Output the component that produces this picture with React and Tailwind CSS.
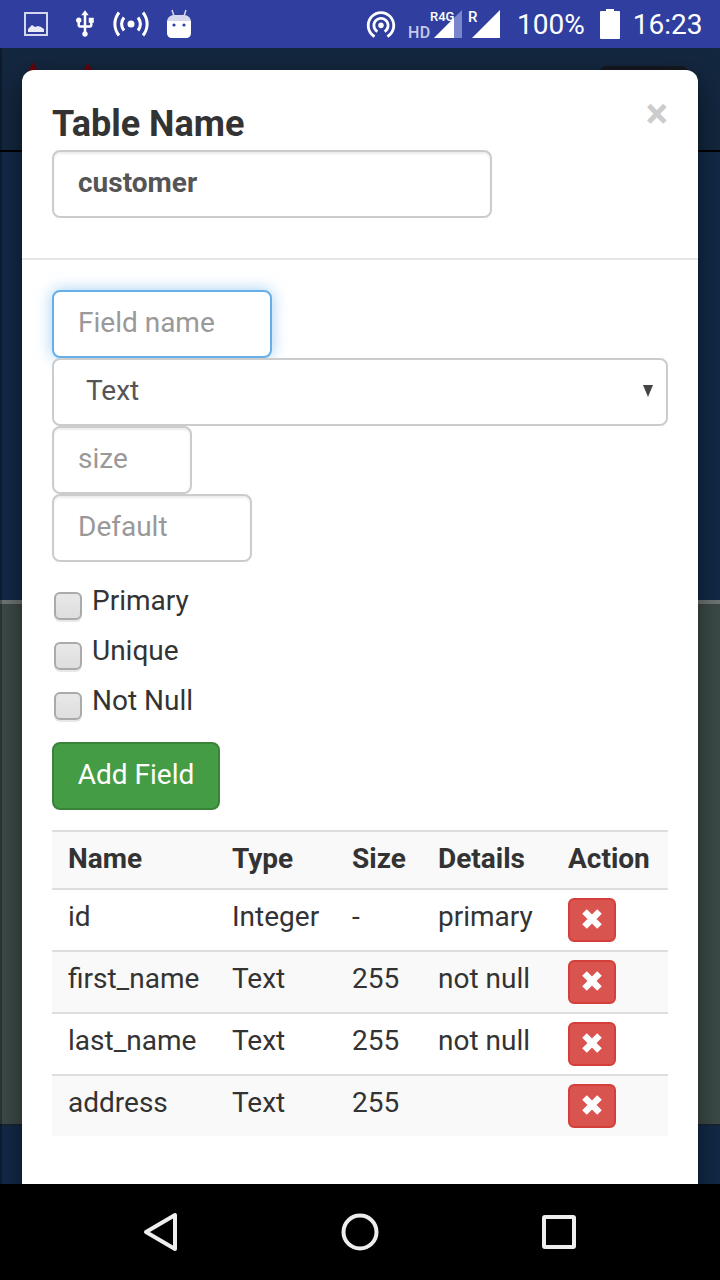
import React from "react";

const fields = [
  { name: "id", type: "Integer", size: "-", details: "primary" },
  { name: "first_name", type: "Text", size: "255", details: "not null" },
  { name: "last_name", type: "Text", size: "255", details: "not null" },
  { name: "address", type: "Text", size: "255", details: "" },
];

function StatusBar() {
  return (
    <div className="h-12 shrink-0 bg-[#303f9f] flex items-center text-white relative z-20">
      <svg width="24" height="24" viewBox="0 0 24 24" className="ml-6 shrink-0">
        <rect x="1" y="1" width="22" height="22" fill="none" stroke="#d5d8ec" strokeWidth="2" />
        <path d="M4 20v-3l4-4 3 2 3-1 3 1 3 2v3z" fill="#e8eaf6" />
      </svg>
      <svg width="30" height="30" viewBox="0 0 24 24" className="ml-[22px] shrink-0" fill="white">
        <path d="M15 7v4h1v2h-3V5h2l-3-4-3 4h2v8H8v-2.07c.7-.37 1.2-1.08 1.2-1.93 0-1.21-.99-2.2-2.2-2.2-1.21 0-2.2.99-2.2 2.2 0 .85.5 1.56 1.2 1.93V13c0 1.11.89 2 2 2h3v3.05c-.71.37-1.2 1.1-1.2 1.95 0 1.22.99 2.2 2.2 2.2 1.21 0 2.2-.98 2.2-2.2 0-.85-.49-1.58-1.2-1.95V15h3c1.11 0 2-.89 2-2v-2h1V7h-4z" />
      </svg>
      <svg width="36" height="28" viewBox="0 0 36 28" className="ml-[13px] shrink-0" fill="none" stroke="white" strokeWidth="3">
        <circle cx="18" cy="14" r="3.5" fill="white" stroke="none" />
        <path d="M11 7.5c-3 4-3 9 0 13M25 7.5c3 4 3 9 0 13" />
        <path d="M6 2.5c-5.5 7-5.5 16 0 23M30 2.5c5.5 7 5.5 16 0 23" />
      </svg>
      <svg width="26" height="30" viewBox="0 0 26 30" className="ml-[17px] shrink-0">
        <path d="M6 1l2 6M20 1l-2 6" stroke="#d5d8ec" strokeWidth="1.5" />
        <path d="M1 13c0-4 3-7 7-7h10c4 0 7 3 7 7z" fill="#d5d8ec" />
        <path d="M1 12h24v12c0 3-2 5-5 5H6c-3 0-5-2-5-5z" fill="white" />
        <circle cx="8" cy="16" r="1.6" fill="#303f9f" />
        <circle cx="18" cy="16" r="1.6" fill="#303f9f" />
      </svg>
      <svg width="34" height="34" viewBox="0 0 24 24" className="ml-[172px] shrink-0" fill="white">
        <path d="M12 11c-1.1 0-2 .9-2 2s.9 2 2 2 2-.9 2-2-.9-2-2-2zm6 2c0-3.31-2.69-6-6-6s-6 2.69-6 6c0 2.22 1.21 4.15 3 5.19l1-1.74c-1.19-.7-2-1.97-2-3.45 0-2.21 1.79-4 4-4s4 1.79 4 4c0 1.48-.81 2.75-2 3.45l1 1.74c1.79-1.04 3-2.97 3-5.19zM12 3C6.48 3 2 7.48 2 13c0 3.7 2.01 6.92 4.99 8.65l1-1.73C5.61 18.53 4 15.96 4 13c0-4.42 3.58-8 8-8s8 3.58 8 8c0 2.96-1.61 5.53-4 6.92l1 1.73c2.99-1.73 5-4.95 5-8.65 0-5.52-4.48-10-10-10z" />
      </svg>
      <div className="relative ml-[10px] w-[54px] h-12 shrink-0">
        <span className="absolute left-0 top-[25px] text-[16px] leading-[15px] font-medium tracking-[0.5px] text-[#c5cae9]">HD</span>
        <span className="absolute left-[22px] top-[10px] text-[13px] leading-[13px] font-medium">R4G</span>
      </div>
      <svg width="30" height="30" viewBox="0 0 30 30" className="-ml-[28px] mt-[2px] shrink-0">
        <path d="M0 28L28 0v28z" fill="#7986cb" />
        <path d="M0 28l20-20v20z" fill="white" />
      </svg>
      <div className="relative ml-[4px] w-[12px] h-12 shrink-0">
        <span className="absolute left-0 top-[10px] text-[15px] leading-[15px] font-medium">R</span>
      </div>
      <svg width="30" height="30" viewBox="0 0 30 30" className="-ml-[8px] mt-[2px] shrink-0">
        <path d="M0 28L28 0v28z" fill="white" />
      </svg>
      <span className="ml-[15px] mt-[1px] text-[28px] leading-none">100%</span>
      <svg width="20" height="30" viewBox="0 0 20 30" className="ml-[15px] shrink-0">
        <path d="M6 0h8v2h5a1 1 0 0 1 1 1v26a1 1 0 0 1-1 1H1a1 1 0 0 1-1-1V3a1 1 0 0 1 1-1h5z" fill="white" />
      </svg>
      <span className="ml-[13px] mt-[1px] text-[28px] leading-none">16:23</span>
    </div>
  );
}

function NavBar() {
  return (
    <div className="h-24 shrink-0 bg-black flex items-center relative z-20">
      <svg width="36" height="40" viewBox="0 0 36 40" className="ml-[143px] shrink-0" fill="none" stroke="#eeeeee" strokeWidth="4" strokeLinejoin="round">
        <path d="M32 3v34L3 20z" />
      </svg>
      <svg width="38" height="38" viewBox="0 0 38 38" className="ml-[162px] shrink-0" fill="none" stroke="#eeeeee" strokeWidth="4">
        <circle cx="19" cy="19" r="16.5" />
      </svg>
      <svg width="34" height="34" viewBox="0 0 34 34" className="ml-[163px] shrink-0" fill="none" stroke="#eeeeee" strokeWidth="4" strokeLinejoin="round">
        <rect x="2" y="2" width="30" height="30" rx="1" />
      </svg>
    </div>
  );
}

function CheckRow({ label }) {
  return (
    <label className="h-[50px] flex items-start pl-[2px]">
      <input
        type="checkbox"
        className="appearance-none mt-[6px] w-[28px] h-[28px] rounded-[6px] border-2 border-[#aaaaaa] bg-linear-to-b from-[#e8e8e8] to-[#dedede] shadow-[0_2px_0_#e8e8e8]"
      />
      <span className="ml-[10px] text-[28px] leading-[30px] text-[#333333]">{label}</span>
    </label>
  );
}

function RemoveButton() {
  return (
    <button className="w-12 h-11 rounded-[6px] bg-[#d9534f] border-2 border-[#d43f3a] flex items-center justify-center">
      <svg width="24" height="24" viewBox="0 0 24 24" className="-mt-[3px]">
        <path d="M4.5 4.5l15 15M19.5 4.5l-15 15" stroke="white" strokeWidth="6.5" />
      </svg>
    </button>
  );
}

function Modal() {
  const inputClass =
    "block h-[68px] rounded-[8px] border-2 border-[#cccccc] bg-white px-[24px] pb-[4px] text-[28px] text-[#555555] placeholder:text-[#999999] shadow-[inset_0_2px_2px_rgba(0,0,0,0.075)] outline-none";

  return (
    <div className="absolute left-[22px] top-[22px] w-[676px] h-[1200px] bg-white rounded-t-[12px] shadow-[0_10px_30px_rgba(0,0,0,0.5)] text-[#333333]">
      <div className="relative h-[190px] px-[30px] pt-[29px] border-b-2 border-[#e5e5e5]">
        <span className="absolute right-[30px] top-[15px] text-[42px] leading-[58px] font-bold text-[#cccccc]">×</span>
        <h4 className="text-[36px] leading-[51px] font-bold">Table Name</h4>
        <input
          readOnly
          value="customer"
          className={inputClass + " w-[440px] font-bold"}
        />
      </div>

      <div className="px-[30px] pt-[30px]">
        <input
          readOnly
          placeholder="Field name"
          className="block w-[220px] h-[68px] rounded-[8px] border-2 border-[#66afe9] bg-white px-[24px] pb-[4px] text-[28px] placeholder:text-[#999999] shadow-[0_0_16px_rgba(102,175,233,0.6)] outline-none"
        />
        <div className="relative">
          <select className="block w-full h-[68px] appearance-none rounded-[8px] border-2 border-[#cccccc] bg-white pl-[32px] pb-[3px] text-[28px] text-[#555555] outline-none">
            <option>Text</option>
          </select>
          <svg width="10" height="12" viewBox="0 0 10 12" className="absolute right-[15px] top-[27px]">
            <path d="M0 0h10L5 12z" fill="#444444" />
          </svg>
        </div>
        <input readOnly placeholder="size" className={inputClass + " w-[140px]"} />
        <input readOnly placeholder="Default" className={inputClass + " w-[200px]"} />

        <div className="mt-[24px]">
          <CheckRow label="Primary" />
          <CheckRow label="Unique" />
          <CheckRow label="Not Null" />
        </div>

        <button className="mt-[6px] block w-[168px] h-[68px] rounded-[8px] bg-[#449d44] border-2 border-[#398439] pb-[2px] text-white text-[28px]">
          Add Field
        </button>

        <table className="mt-[20px] w-full table-fixed border-collapse text-[28px] leading-[40px] text-left">
          <colgroup>
            <col className="w-[164px]" />
            <col className="w-[120px]" />
            <col className="w-[86px]" />
            <col className="w-[130px]" />
            <col className="w-[116px]" />
          </colgroup>
          <thead>
            <tr className="bg-[#f9f9f9] border-t-2 border-b-2 border-[#dddddd]">
              <th className="px-4 pt-[7px] pb-[9px] font-bold">Name</th>
              <th className="px-4 pt-[7px] pb-[9px] font-bold">Type</th>
              <th className="px-4 pt-[7px] pb-[9px] font-bold">Size</th>
              <th className="px-4 pt-[7px] pb-[9px] font-bold">Details</th>
              <th className="px-4 pt-[7px] pb-[9px] font-bold">Action</th>
            </tr>
          </thead>
          <tbody>
            {fields.map((f, i) => (
              <tr key={f.name} className={(i % 2 === 1 ? "bg-[#f9f9f9]" : "bg-white") + (i > 0 ? " border-t-2 border-[#dddddd]" : "")}>
                <td className="px-4 pt-[7px] align-top">{f.name}</td>
                <td className="px-4 pt-[7px] align-top">{f.type}</td>
                <td className="px-4 pt-[7px] align-top">{f.size}</td>
                <td className="px-4 pt-[7px] align-top">{f.details}</td>
                <td className="px-4 py-2 align-top"><RemoveButton /></td>
              </tr>
            ))}
          </tbody>
        </table>
      </div>
    </div>
  );
}

export default function App() {
  return (
    <div className="w-[720px] h-[1280px] flex flex-col overflow-hidden bg-black font-['Roboto',sans-serif]">
      <StatusBar />
      <div className="relative flex-1 min-h-0 overflow-hidden flex flex-col">
        {/* dimmed page behind the modal */}
        <div className="h-[104px] shrink-0 bg-[#13273f] border-b-2 border-black" />
        <div className="h-[448px] shrink-0 bg-[#122a48]" />
        <div className="h-[4px] shrink-0 bg-[#6f7776]" />
        <div className="h-[520px] shrink-0 bg-[#3d4b48]" />
        <div className="flex-1 bg-[#122a48] border-t-2 border-[#1a2433]" />
        {/* darker sliver along the left edge of the page */}
        <span className="absolute left-0 top-0 bottom-0 w-[2px] bg-black/30" />

        <span className="absolute left-[28px] top-[14px] w-0 h-0 border-x-[5px] border-x-transparent border-b-[10px] border-b-[#6a0008]" />
        <span className="absolute left-[82px] top-[15px] w-0 h-0 border-x-[6px] border-x-transparent border-b-[10px] border-b-[#6a0008]" />
        <span className="absolute left-[600px] top-[18px] w-[88px] h-[8px] rounded-t-[6px] bg-[#15191f]" />

        <Modal />
      </div>
      <NavBar />
    </div>
  );
}
